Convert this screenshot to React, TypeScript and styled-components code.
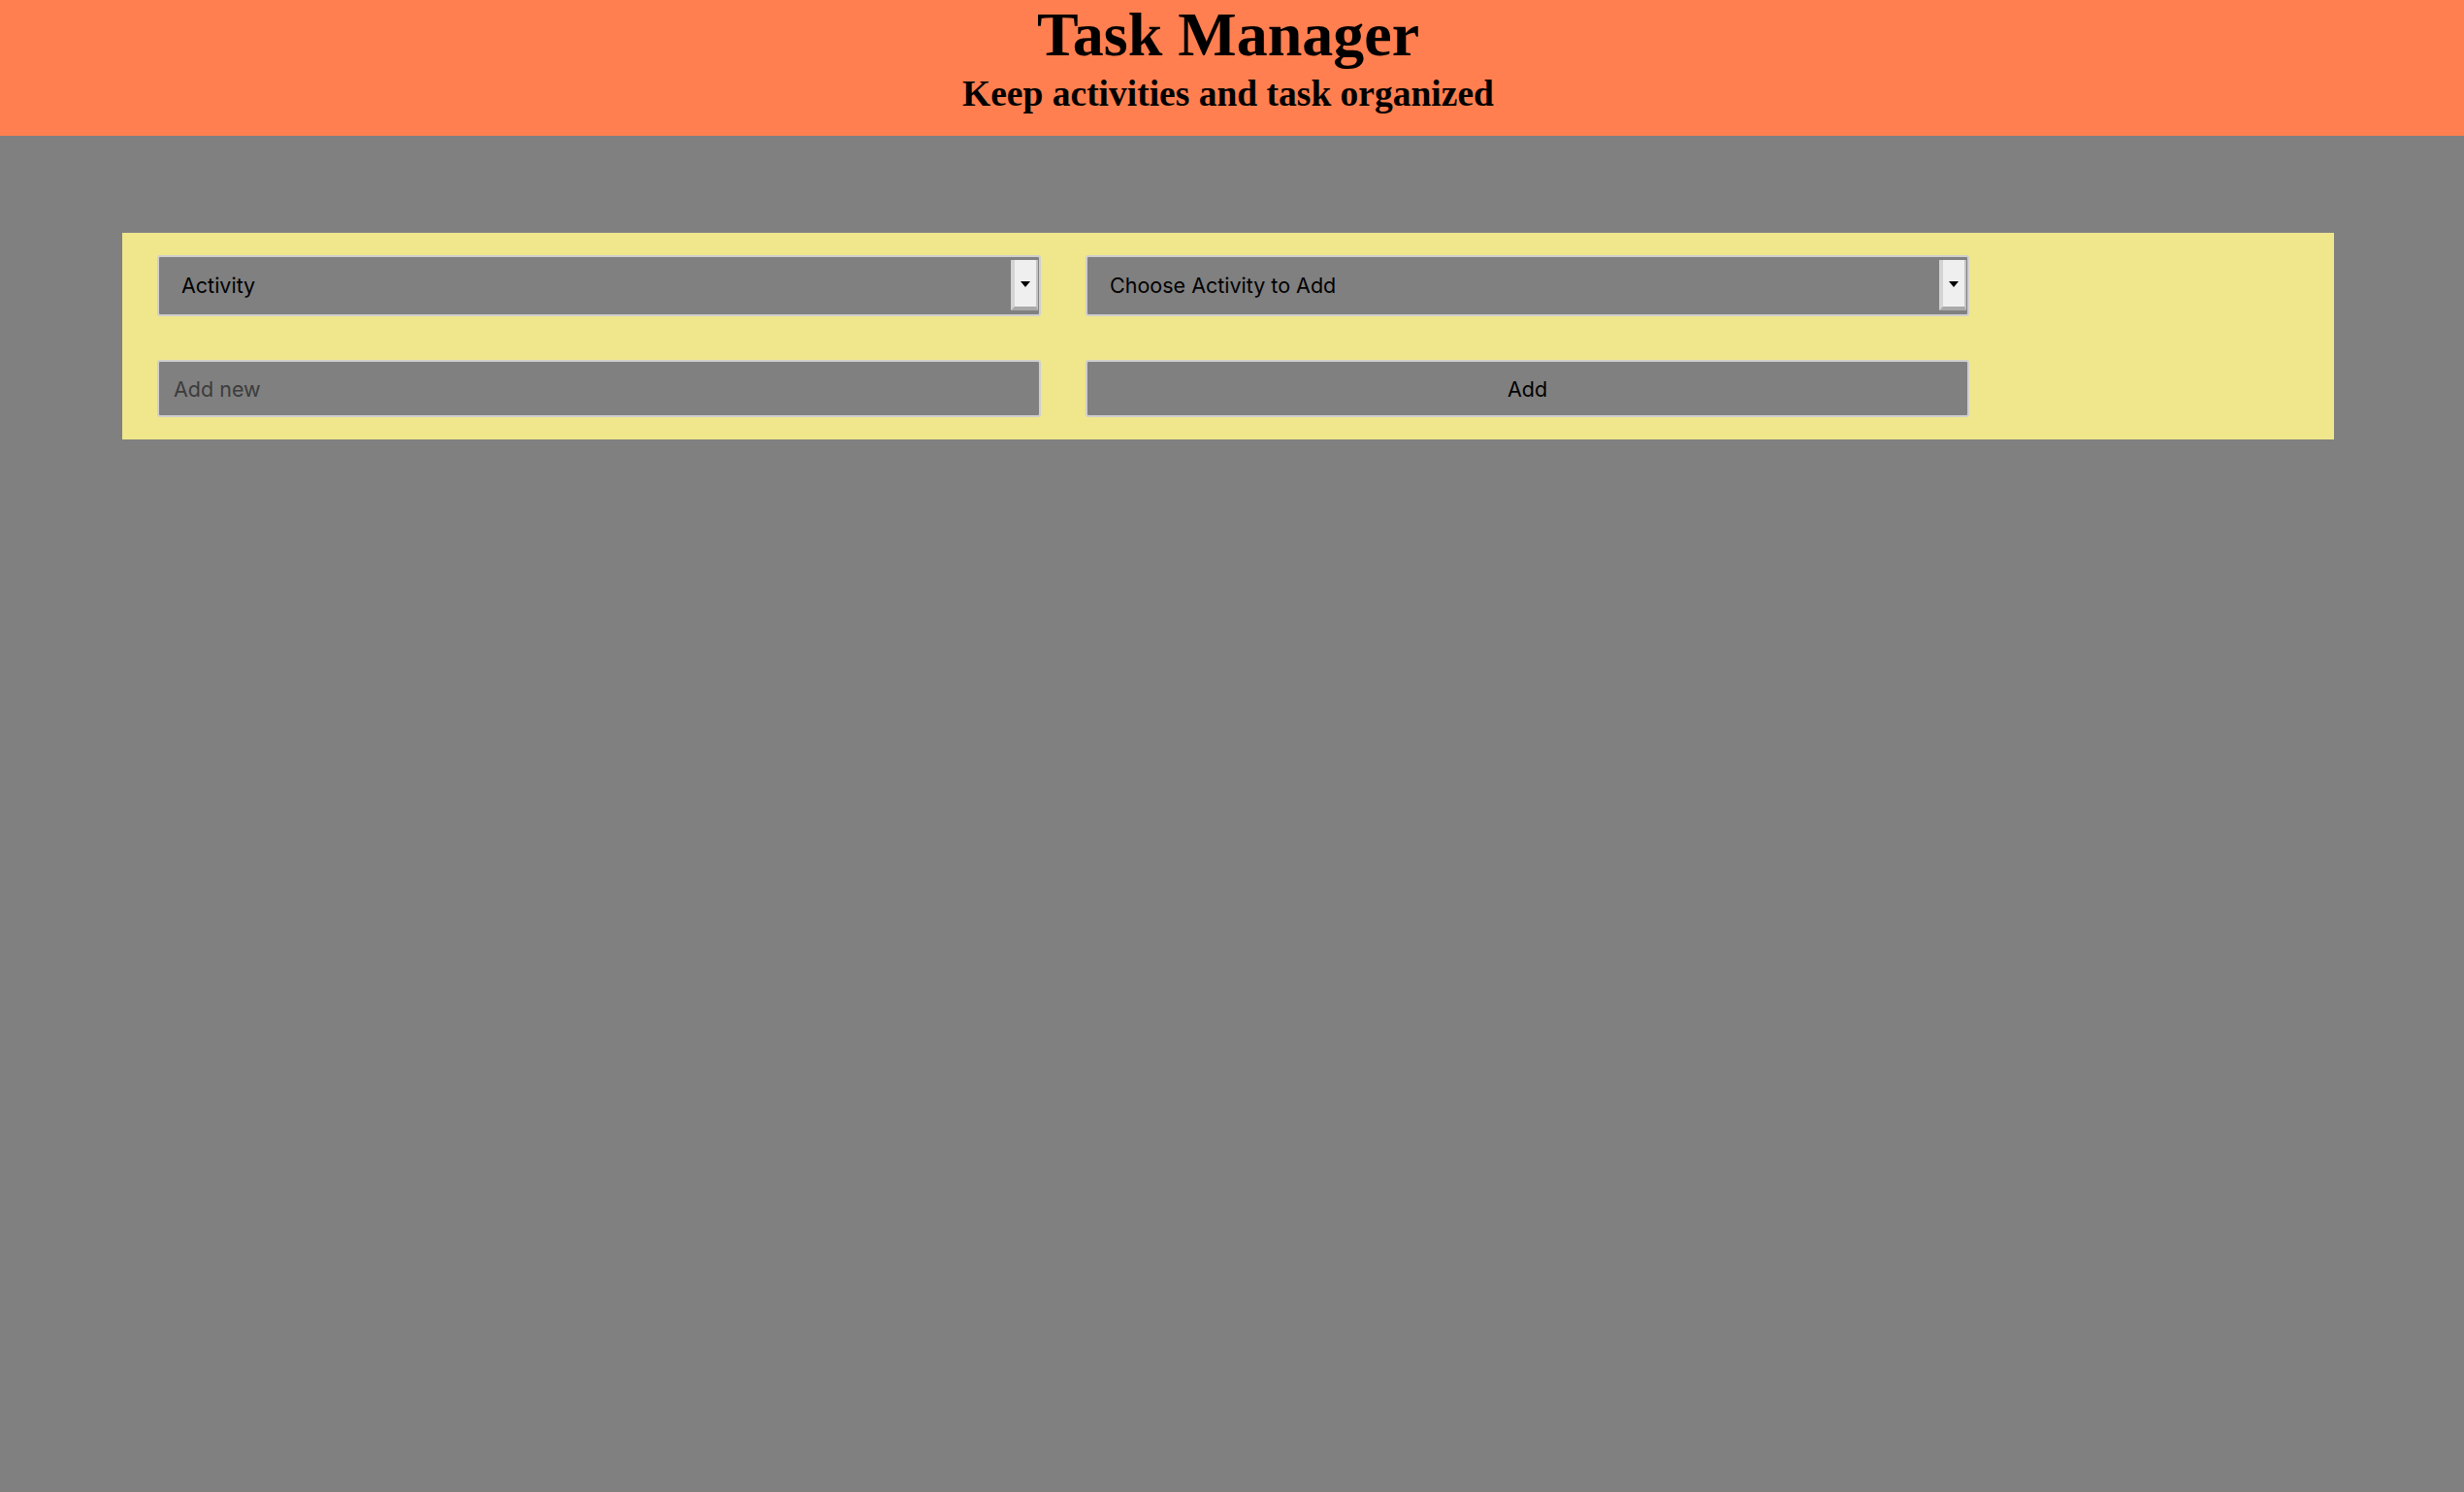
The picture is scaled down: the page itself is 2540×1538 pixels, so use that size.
import styled, { createGlobalStyle } from "styled-components";

const GlobalStyle = createGlobalStyle`
  html, body {
    margin: 0;
    padding: 0;
    background-color: #808080;
  }
`;

export default function App() {
  return (
    <>
      <GlobalStyle />
      <Header>
        <Title>Task Manager</Title>
        <Subtitle>Keep activities and task organized</Subtitle>
      </Header>
      <Panel>
        <SelectBox>
          <Select defaultValue="activity">
            <option value="activity">Activity</option>
          </Select>
          <ArrowButton>
            <svg width="10" height="6" viewBox="0 0 10 6">
              <path d="M0 0 L10 0 L5 6 Z" fill="#000" />
            </svg>
          </ArrowButton>
        </SelectBox>
        <SelectBox>
          <Select defaultValue="choose">
            <option value="choose">Choose Activity to Add</option>
          </Select>
          <ArrowButton>
            <svg width="10" height="6" viewBox="0 0 10 6">
              <path d="M0 0 L10 0 L5 6 Z" fill="#000" />
            </svg>
          </ArrowButton>
        </SelectBox>
        <TextInput placeholder="Add new" />
        <AddButton>Add</AddButton>
      </Panel>
    </>
  );
}

const Header = styled.header`
  background-color: #ff7f50;
  height: 140px;
  box-sizing: border-box;
  padding-right: 8px;
  display: flex;
  flex-direction: column;
  align-items: center;
  font-family: "Liberation Serif", "Times New Roman", serif;
  color: #000;
`;

const Title = styled.h1`
  margin: 0;
  font-size: 64px;
  line-height: 71px;
  font-weight: bold;
`;

const Subtitle = styled.h2`
  margin: 5px 0 0;
  font-size: 37.5px;
  line-height: 41px;
  font-weight: bold;
`;

const Panel = styled.div`
  background-color: #f0e68c;
  margin: 100px 134px 0 126px;
  padding: 23px 36px;
  display: grid;
  grid-template-columns: 911px 911px;
  grid-template-rows: 63px 59px;
  column-gap: 46px;
  row-gap: 45px;
`;

const SelectBox = styled.div`
  display: flex;
  box-sizing: border-box;
  border: 2px solid #cfcfcf;
  border-radius: 3px;
  background-color: #808080;
  padding: 3px 1px 4px 0;
`;

const Select = styled.select`
  flex: 1;
  appearance: none;
  -webkit-appearance: none;
  border: none;
  outline: none;
  background: transparent;
  padding: 0 0 0 23px;
  font-family: Inter, "Liberation Sans", sans-serif;
  font-size: 21.5px;
  color: #000;
`;

const ArrowButton = styled.span`
  width: 22px;
  display: flex;
  align-items: center;
  justify-content: center;
  background-color: #efefef;
  border-left: 4px solid #d4d4d4;
  border-bottom: 4px solid #a9a9a9;
  border-right: 2px solid #c4c4c4;
  padding-top: 2px;
`;

const TextInput = styled.input`
  box-sizing: border-box;
  border: 2px solid #cfcfcf;
  border-radius: 3px;
  background-color: #808080;
  padding: 0 0 0 15px;
  outline: none;
  font-family: Inter, "Liberation Sans", sans-serif;
  font-size: 21.5px;
  color: #000;
  &::placeholder {
    color: #3c3c3c;
  }
`;

const AddButton = styled.button`
  box-sizing: border-box;
  border: 2px solid #cfcfcf;
  border-radius: 3px;
  background-color: #808080;
  font-family: Inter, "Liberation Sans", sans-serif;
  font-size: 21.5px;
  color: #000;
  cursor: pointer;
`;
